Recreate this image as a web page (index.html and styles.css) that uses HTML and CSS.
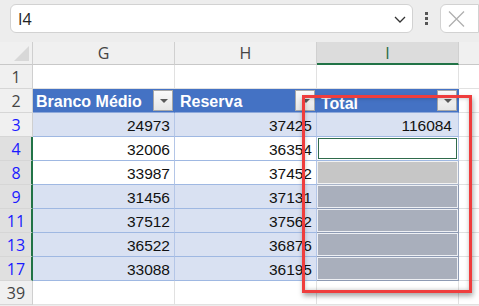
FILE: index.html
```html
<!DOCTYPE html>
<html>
<head>
<meta charset="utf-8">
<link rel="stylesheet" href="styles.css">
</head>
<body>
<div class="app">
  <div class="fbar">
    <div class="namebox">
      <span class="ref">I4</span>
      <svg class="chev" width="12" height="7" viewBox="0 0 12 7"><path d="M1 1l5 5 5-5" fill="none" stroke="#333" stroke-width="1.3"/></svg>
    </div>
    <div class="dots"><i></i><i></i><i></i></div>
    <div class="xbox">
      <svg width="17" height="16" viewBox="0 0 17 16"><path d="M1 0.5l15 15M16 0.5l-15 15" stroke="#b0b0b0" stroke-width="1.3" fill="none"/></svg>
    </div>
  </div>

  <div class="sheet">
    <div class="corner"><span class="tri"></span></div>
    <div class="colh">G</div>
    <div class="colh">H</div>
    <div class="colh sel">I</div>
    <div class="colh last"></div>

    <div class="rowh">1</div>
    <div class="c"></div><div class="c"></div><div class="c"></div><div class="c last"></div>

    <div class="rowh">2</div>
    <div class="c th">Branco Médio<span class="fb"></span></div>
    <div class="c th th2">Reserva<span class="fb"></span></div>
    <div class="c th th3">Total<span class="fb"></span></div>
    <div class="c last"></div>

    <div class="rowh flt">3</div>
    <div class="c t band num">24973</div>
    <div class="c t band num">37425</div>
    <div class="c t band num wide">116084</div>
    <div class="c last"></div>

    <div class="rowh flt on">4</div>
    <div class="c t num">32006</div>
    <div class="c t num">36354</div>
    <div class="c t act"><span class="actbox"></span></div>
    <div class="c last"></div>

    <div class="rowh flt on">8</div>
    <div class="c t num">33987</div>
    <div class="c t num">37452</div>
    <div class="c t s1"></div>
    <div class="c last"></div>

    <div class="rowh flt on">9</div>
    <div class="c t band num">31456</div>
    <div class="c t band num">37131</div>
    <div class="c t s2"></div>
    <div class="c last"></div>

    <div class="rowh flt on">11</div>
    <div class="c t band num">37512</div>
    <div class="c t band num">37562</div>
    <div class="c t s2"></div>
    <div class="c last"></div>

    <div class="rowh flt on">13</div>
    <div class="c t band num">36522</div>
    <div class="c t band num">36876</div>
    <div class="c t s2"></div>
    <div class="c last"></div>

    <div class="rowh flt on">17</div>
    <div class="c t band num">33088</div>
    <div class="c t band num">36195</div>
    <div class="c t s2"></div>
    <div class="c last"></div>

    <div class="rowh">39</div>
    <div class="c"></div><div class="c"></div><div class="c"></div><div class="c last"></div>
  </div>

  <div class="mark"></div>
</div>
</body>
</html>
```

FILE: styles.css
```css
* { box-sizing: border-box; }
html, body { margin: 0; padding: 0; }
body { width: 479px; height: 306px; overflow: hidden; background: #fff; }

.app { position: relative; width: 479px; height: 306px; overflow: hidden; background: #ededed; }

.fbar {
  height: 42px;
  display: flex;
  align-items: flex-start;
  padding: 4px 0 0 10px;
}
.namebox {
  width: 412px;
  height: 29px;
  background: #fff;
  border: 1px solid #d2d2d2;
  border-radius: 6px;
  display: flex;
  align-items: center;
  justify-content: space-between;
  padding: 0 6px 0 7px;
}
.ref {
  font-family: "Open Sans", "Noto Sans", sans-serif;
  font-size: 16px;
  color: #222;
}
.chev { margin-top: 1px; }
.dots {
  width: 27px;
  height: 29px;
  display: flex;
  flex-direction: column;
  align-items: center;
  justify-content: center;
  gap: 2px;
  padding-left: 1px;
}
.dots i { display: block; width: 3px; height: 3px; background: #555; }
.xbox {
  width: 40px;
  height: 29px;
  background: #fff;
  border: 1px solid #d2d2d2;
  border-radius: 6px 0 0 6px;
  display: flex;
  align-items: center;
  padding-left: 7px;
}

.sheet {
  display: grid;
  grid-template-columns: 33px 142px 142px 142px 20px;
  grid-template-rows: 23px repeat(10, 24px);
  background: #fff;
}

.corner {
  background: #f0f0f0;
  border-right: 1px solid #cfcfcf;
  border-bottom: 1px solid #c8c8c8;
  position: relative;
}
.tri {
  position: absolute;
  right: 3px;
  bottom: 3px;
  width: 0; height: 0;
  border-left: 15px solid transparent;
  border-bottom: 15px solid #d8d8d8;
}

.colh {
  background: #f0f0f0;
  border-right: 1px solid #d0d0d0;
  border-bottom: 1px solid #c8c8c8;
  font-family: "Open Sans", "Noto Sans", sans-serif;
  font-size: 16px;
  color: #444;
  display: flex;
  align-items: center;
  justify-content: center;
}
.colh.sel {
  background: #dcdcdc;
  color: #1e6b41;
  border-bottom: 2px solid #217346;
}
.colh.last { border-right: none; }

.rowh {
  background: #f0f0f0;
  border-right: 1px solid #cfcfcf;
  border-bottom: 1px solid #d6d6d6;
  font-family: "Open Sans", "Noto Sans", sans-serif;
  font-size: 16px;
  color: #444;
  display: flex;
  align-items: center;
  justify-content: center;
  padding-top: 1px;
}
.rowh.flt { color: #1a1aff; }
.rowh.on {
  background: #e0e0e0;
  border-right: 2px solid #217346;
  padding-left: 1px;
}

.c {
  border-right: 1px solid #e1e1e1;
  border-bottom: 1px solid #e1e1e1;
  font-family: "Liberation Sans", Arial, sans-serif;
  font-size: 15.5px;
  color: #111;
  display: flex;
  align-items: center;
  position: relative;
}
.c.last { border-right: none; }

.th {
  background: #4472c4;
  color: #fff;
  font-weight: bold;
  font-size: 16px;
  padding-left: 3px;
  padding-top: 3px;
  border-right: 1px solid #4472c4;
  border-bottom: 1px solid #8ea9db;
}
.th2 { padding-left: 5px; }
.th3 { padding-left: 4px; padding-top: 6px; }
.fb {
  position: absolute;
  right: 1px;
  top: 1px;
  width: 20px;
  height: 21px;
  background: linear-gradient(#fafafa, #e6e6e6);
  border: 1px solid #a7a7a7;
}
.fb::after {
  content: "";
  position: absolute;
  left: 6px;
  top: 8px;
  border-left: 4px solid transparent;
  border-right: 4px solid transparent;
  border-top: 4px solid #5a5a5a;
}

.t {
  border-right: 1px solid #b4c6e7;
  border-bottom: 1px solid #9fb8e2;
  background: #fff;
}
.band { background: #d9e1f2; }
.num { justify-content: flex-end; padding-right: 4px; padding-top: 2px; }
.wide { padding-right: 6px; }

.act { padding: 1px 1px 1px 1px; }
.actbox {
  display: block;
  width: 100%;
  height: 100%;
  border: 1px solid #2f6b4c;
  background: #fff;
}
.s1 {
  background: #c6c6c6;
  box-shadow: inset 0 0 0 1px #f2f2f2;
  border-right: 1px solid #a9b4c8;
  border-bottom: 1px solid #a9b4c8;
}
.s2 {
  background: #a9afbc;
  box-shadow: inset 0 0 0 1px #eef0f4;
  border-right: 1px solid #8d9ab3;
  border-bottom: 1px solid #8d9ab3;
}

.mark {
  position: absolute;
  left: 302px;
  top: 95px;
  width: 170px;
  height: 198px;
  border: 3px solid #ef3d3d;
  box-shadow: 1px 3px 5px rgba(0,0,0,0.35), inset 0 0 4px rgba(0,0,0,0.25);
  pointer-events: none;
}
```
